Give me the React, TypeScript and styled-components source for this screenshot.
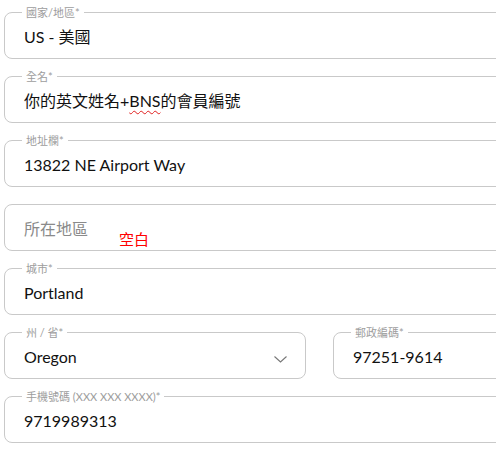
import { ReactElement } from 'react';
import styled, { createGlobalStyle } from 'styled-components';

const GlobalStyle = createGlobalStyle`
    html,
    body {
        margin: 0;
        padding: 0;
        background: #fff;
        overflow: hidden;
    }
    body {
        font-family: Lato, 'Noto Sans CJK TC', sans-serif;
    }
`;

type FieldProps = {
    label?: string;
    children: React.ReactNode;
    width?: number;
};

const Field = ({ label, children, width }: FieldProps): ReactElement => (
    <Box $width={width}>
        {label && <Label>{label}</Label>}
        {children}
    </Box>
);

const App = (): ReactElement => (
    <>
        <GlobalStyle />
        <Form>
            <Field label="國家/地區*">
                <Value>US - 美國</Value>
            </Field>
            <Field label="全名*">
                <Value>
                    你的英文姓名+<Misspelled>BNS</Misspelled>的會員編號
                </Value>
            </Field>
            <Field label="地址欄*">
                <Value>13822 NE Airport Way</Value>
            </Field>
            <Field>
                <Placeholder>所在地區</Placeholder>
                <Note>空白</Note>
            </Field>
            <Field label="城市*">
                <Value>Portland</Value>
            </Field>
            <Row>
                <Field label="州 / 省*" width={302}>
                    <SelectInner>
                        <Value>Oregon</Value>
                        <svg width="13" height="7" viewBox="0 0 13 7">
                            <polyline
                                points="0.5,0.5 6.5,6 12.5,0.5"
                                fill="none"
                                stroke="#777"
                                strokeWidth="1.1"
                            />
                        </svg>
                    </SelectInner>
                </Field>
                <Field label="郵政編碼*">
                    <Value>97251-9614</Value>
                </Field>
            </Row>
            <Field label="手機號碼 (XXX XXX XXXX)*">
                <Value>9719989313</Value>
            </Field>
        </Form>
    </>
);

const Form = styled.div`
    display: flex;
    flex-direction: column;
    gap: 17px;
    padding: 12px 0 0 4px;
    width: 540px;
`;

const Row = styled.div`
    display: flex;
    gap: 27px;
`;

const Box = styled.div<{ $width?: number }>`
    position: relative;
    box-sizing: border-box;
    height: 47px;
    width: ${(p) => (p.$width ? `${p.$width}px` : 'auto')};
    flex: ${(p) => (p.$width ? 'none' : '1 0 auto')};
    border: 1px solid #c9c9c9;
    border-radius: 8px;
    padding: 15px 18px 0 19px;
    background: #fff;
`;

const Label = styled.span`
    position: absolute;
    top: -7px;
    left: 17px;
    padding: 0 4px;
    background: #fff;
    font-size: 11px;
    line-height: 13px;
    color: #9d9d9d;
    white-space: nowrap;
`;

const Value = styled.div`
    font-size: 16px;
    line-height: 18px;
    color: #111;
    white-space: nowrap;
`;

const Placeholder = styled(Value)`
    color: #8a8a8a;
`;

const Misspelled = styled.span`
    text-decoration: underline wavy #e02020;
    text-decoration-thickness: 1px;
    text-underline-offset: 3px;
`;

const Note = styled.span`
    position: absolute;
    left: 114px;
    top: 25px;
    font-size: 15px;
    line-height: 18px;
    color: #ff0000;
`;

const SelectInner = styled.div`
    display: flex;
    align-items: center;
    justify-content: space-between;
    svg {
        margin-top: 4px;
    }
`;

export default App;
